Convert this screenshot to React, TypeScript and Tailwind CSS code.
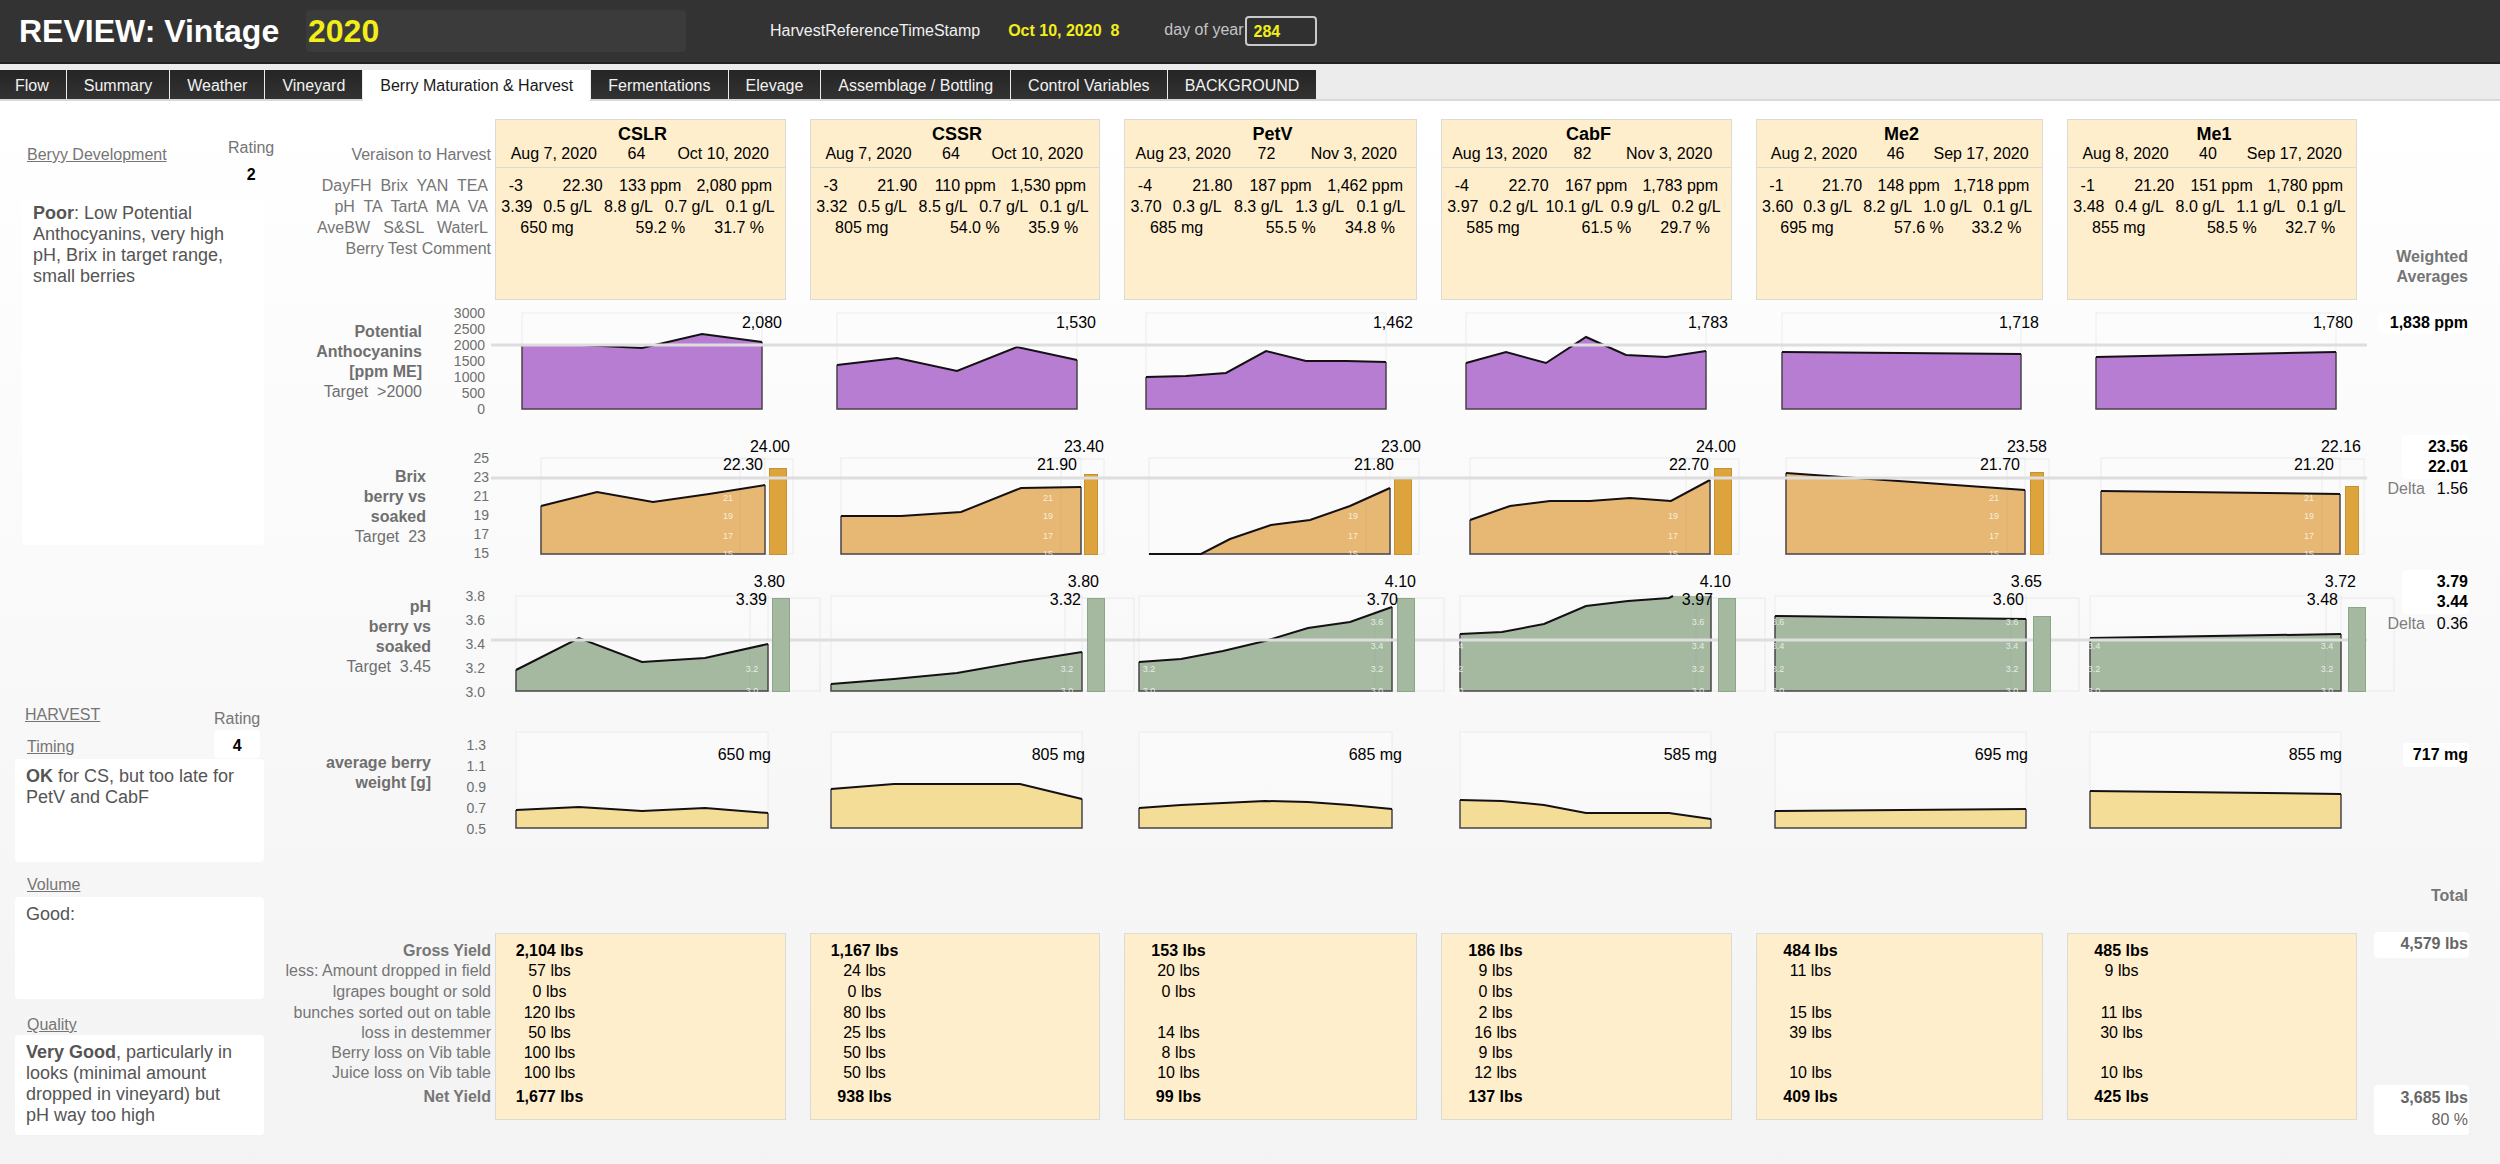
import React from "react";

type Point = [number, number];

type Series = {
  points: Point[];
  /** How many of the points carry the heavy top line; all of them by default. */
  stroked?: number;
  bar?: { x: number; width: number; top: number };
  frame?: { x: number; right: number };
  ticks?: { x: number; labels: string[] }[];
};

type Measure = {
  id: string;
  title: string[];
  target?: string;
  scale: string[];
  titleClass: string;
  scaleClass: string;
  rowClass: string;
  viewBox: string;
  top: number;
  base: number;
  fill: string;
  barFill?: string;
  barStroke?: string;
  barTop?: number;
  targetY?: number;
  barsOverTarget?: boolean;
  tickY?: Record<string, number>;
  series: Series[];
};

const COLUMNS = "grid grid-cols-[291fr_290fr_293fr_291fr_287fr_290fr] gap-x-6";

const ACTIVE_TAB = "Berry Maturation & Harvest";

const tabs = [
  "Flow",
  "Summary",
  "Weather",
  "Vineyard",
  ACTIVE_TAB,
  "Fermentations",
  "Elevage",
  "Assemblage / Bottling",
  "Control Variables",
  "BACKGROUND",
];

const blocks = [
  {
    name: "CSLR",
    dates: ["Aug 7, 2020", "64", "Oct 10, 2020"],
    first: ["-3", "22.30", "133 ppm", "2,080 ppm"],
    second: ["3.39", "0.5 g/L", "8.8 g/L", "0.7 g/L", "0.1 g/L"],
    third: ["650 mg", "59.2 %", "31.7 %"],
    anth: "2,080",
    brix: ["24.00", "22.30"],
    ph: ["3.80", "3.39"],
    weight: "650 mg",
  },
  {
    name: "CSSR",
    dates: ["Aug 7, 2020", "64", "Oct 10, 2020"],
    first: ["-3", "21.90", "110 ppm", "1,530 ppm"],
    second: ["3.32", "0.5 g/L", "8.5 g/L", "0.7 g/L", "0.1 g/L"],
    third: ["805 mg", "54.0 %", "35.9 %"],
    anth: "1,530",
    brix: ["23.40", "21.90"],
    ph: ["3.80", "3.32"],
    weight: "805 mg",
  },
  {
    name: "PetV",
    dates: ["Aug 23, 2020", "72", "Nov 3, 2020"],
    first: ["-4", "21.80", "187 ppm", "1,462 ppm"],
    second: ["3.70", "0.3 g/L", "8.3 g/L", "1.3 g/L", "0.1 g/L"],
    third: ["685 mg", "55.5 %", "34.8 %"],
    anth: "1,462",
    brix: ["23.00", "21.80"],
    ph: ["4.10", "3.70"],
    weight: "685 mg",
  },
  {
    name: "CabF",
    dates: ["Aug 13, 2020", "82", "Nov 3, 2020"],
    first: ["-4", "22.70", "167 ppm", "1,783 ppm"],
    second: ["3.97", "0.2 g/L", "10.1 g/L", "0.9 g/L", "0.2 g/L"],
    third: ["585 mg", "61.5 %", "29.7 %"],
    anth: "1,783",
    brix: ["24.00", "22.70"],
    ph: ["4.10", "3.97"],
    weight: "585 mg",
  },
  {
    name: "Me2",
    dates: ["Aug 2, 2020", "46", "Sep 17, 2020"],
    first: ["-1", "21.70", "148 ppm", "1,718 ppm"],
    second: ["3.60", "0.3 g/L", "8.2 g/L", "1.0 g/L", "0.1 g/L"],
    third: ["695 mg", "57.6 %", "33.2 %"],
    anth: "1,718",
    brix: ["23.58", "21.70"],
    ph: ["3.65", "3.60"],
    weight: "695 mg",
  },
  {
    name: "Me1",
    dates: ["Aug 8, 2020", "40", "Sep 17, 2020"],
    first: ["-1", "21.20", "151 ppm", "1,780 ppm"],
    second: ["3.48", "0.4 g/L", "8.0 g/L", "1.1 g/L", "0.1 g/L"],
    third: ["855 mg", "58.5 %", "32.7 %"],
    anth: "1,780",
    brix: ["22.16", "21.20"],
    ph: ["3.72", "3.48"],
    weight: "855 mg",
  },
];

const anthocyanins: Measure = {
  id: "anth",
  title: ["Potential", "Anthocyanins", "[ppm ME]"],
  target: "Target  >2000",
  scale: ["3000", "2500", "2000", "1500", "1000", "500", "0"],
  titleClass: "pt-[22px] pr-[11px]",
  scaleClass: "pt-[5px] pr-[10px] leading-[16px]",
  rowClass: "h-[130px]",
  viewBox: "495 300 1862 130",
  top: 313,
  base: 409,
  fill: "#b77dd2",
  targetY: 345,
  series: [
    { points: [[522, 345], [582, 345], [642, 348], [702, 334], [762, 342]] },
    { points: [[837, 365], [897, 358], [957, 371], [1017, 347], [1077, 360]] },
    { points: [[1146, 377], [1186, 376], [1226, 373], [1266, 351], [1306, 361], [1346, 361], [1386, 362]] },
    { points: [[1466, 363], [1506, 352], [1546, 363], [1586, 337], [1626, 355], [1666, 357], [1706, 351]] },
    { points: [[1782, 352], [2021, 354]] },
    { points: [[2096, 357], [2336, 352]] },
  ],
};

const brix: Measure = {
  id: "brix",
  title: ["Brix", "berry vs", "soaked"],
  target: "Target  23",
  scale: ["25", "23", "21", "19", "17", "15"],
  titleClass: "pt-[37px] pr-[7px]",
  scaleClass: "pt-[19px] pr-[6px] leading-[19px]",
  rowClass: "h-[135px]",
  viewBox: "495 430 1862 135",
  top: 458,
  base: 554,
  fill: "#e6b874",
  barFill: "#dda33d",
  barStroke: "#c8912f",
  barTop: 459,
  targetY: 478,
  tickY: { "21": 501, "19": 519, "17": 539, "15": 557 },
  series: [
    {
      points: [[541, 506], [597, 492], [653, 502], [709, 494], [765, 485]],
      bar: { x: 769, width: 18, top: 468 },
      frame: { x: 740, right: 793 },
      ticks: [{ x: 728, labels: ["21", "19", "17", "15"] }],
    },
    {
      points: [[841, 516], [901, 516], [961, 512], [1021, 488], [1081, 487]],
      bar: { x: 1084, width: 14, top: 474 },
      frame: { x: 1061, right: 1104 },
      ticks: [{ x: 1048, labels: ["21", "19", "17", "15"] }],
    },
    {
      points: [[1149, 554], [1201, 554], [1230, 539], [1271, 525], [1310, 520], [1350, 506], [1390, 488]],
      bar: { x: 1394, width: 18, top: 479 },
      frame: { x: 1366, right: 1419 },
      ticks: [{ x: 1353, labels: ["19", "17", "15"] }],
    },
    {
      points: [[1470, 520], [1510, 506], [1550, 501], [1590, 501], [1630, 498], [1671, 501], [1710, 480]],
      bar: { x: 1714, width: 18, top: 468 },
      frame: { x: 1686, right: 1739 },
      ticks: [{ x: 1673, labels: ["19", "17", "15"] }],
    },
    {
      points: [[1786, 473], [2025, 490]],
      bar: { x: 2030, width: 14, top: 472 },
      frame: { x: 2007, right: 2049 },
      ticks: [{ x: 1994, labels: ["21", "19", "17", "15"] }],
    },
    {
      points: [[2101, 491], [2340, 494]],
      bar: { x: 2345, width: 14, top: 486 },
      frame: { x: 2322, right: 2364 },
      ticks: [{ x: 2309, labels: ["21", "19", "17", "15"] }],
    },
  ],
};

const ph: Measure = {
  id: "ph",
  title: ["pH", "berry vs", "soaked"],
  target: "Target  3.45",
  scale: ["3.8", "3.6", "3.4", "3.2", "3.0"],
  titleClass: "pt-[32px] pr-[2px]",
  scaleClass: "pt-[19px] pr-[10px] leading-[24px]",
  rowClass: "h-[145px]",
  viewBox: "495 565 1862 145",
  top: 596,
  base: 691,
  fill: "#a5b9a1",
  barFill: "#a5b9a1",
  barStroke: "#8ba787",
  barTop: 598,
  targetY: 640,
  barsOverTarget: true,
  tickY: { "3.6": 625, "3.4": 649, "3.2": 672, "3.0": 694 },
  series: [
    {
      points: [[516, 670], [579, 638], [642, 662], [705, 658], [768, 644]],
      bar: { x: 772, width: 18, top: 598 },
      frame: { x: 750, right: 820 },
      ticks: [{ x: 752, labels: ["3.2", "3.0"] }],
    },
    {
      points: [[831, 684], [894, 679], [957, 673], [1019, 662], [1082, 652]],
      bar: { x: 1087, width: 18, top: 598 },
      frame: { x: 1065, right: 1134 },
      ticks: [{ x: 1067, labels: ["3.2", "3.0"] }],
    },
    {
      points: [[1139, 662], [1181, 659], [1223, 651], [1265, 641], [1308, 628], [1350, 622], [1392, 607]],
      bar: { x: 1397, width: 18, top: 598 },
      frame: { x: 1375, right: 1444 },
      ticks: [
        { x: 1149, labels: ["3.2", "3.0"] },
        { x: 1377, labels: ["3.6", "3.4", "3.2", "3.0"] },
      ],
    },
    {
      points: [[1460, 634], [1502, 632], [1544, 624], [1586, 606], [1628, 601], [1669, 598], [1673, 596], [1711, 596]],
      stroked: 7,
      bar: { x: 1718, width: 18, top: 598 },
      frame: { x: 1696, right: 1765 },
      ticks: [
        { x: 1457, labels: ["3.4", "3.2", "3.0"] },
        { x: 1698, labels: ["3.6", "3.4", "3.2", "3.0"] },
      ],
    },
    {
      points: [[1775, 616], [2026, 619]],
      bar: { x: 2033, width: 18, top: 616 },
      frame: { x: 2011, right: 2079 },
      ticks: [
        { x: 1778, labels: ["3.6", "3.4", "3.2", "3.0"] },
        { x: 2012, labels: ["3.6", "3.4", "3.2", "3.0"] },
      ],
    },
    {
      points: [[2090, 638], [2341, 634]],
      bar: { x: 2348, width: 18, top: 607 },
      frame: { x: 2326, right: 2394 },
      ticks: [
        { x: 2094, labels: ["3.4", "3.2", "3.0"] },
        { x: 2327, labels: ["3.4", "3.2", "3.0"] },
      ],
    },
  ],
};

const weight: Measure = {
  id: "weight",
  title: ["average berry", "weight [g]"],
  scale: ["1.3", "1.1", "0.9", "0.7", "0.5"],
  titleClass: "pt-[43px] pr-[2px]",
  scaleClass: "pt-[25px] pr-[9px] leading-[21px]",
  rowClass: "h-[150px]",
  viewBox: "495 710 1862 150",
  top: 732,
  base: 828,
  fill: "#f3dd97",
  series: [
    { points: [[516, 810], [579, 807], [642, 811], [705, 808], [768, 813]] },
    { points: [[831, 789], [894, 784], [957, 784], [1020, 784], [1082, 799]] },
    { points: [[1139, 808], [1181, 805], [1223, 803], [1265, 801], [1308, 802], [1350, 805], [1392, 809]] },
    { points: [[1460, 800], [1502, 801], [1544, 805], [1586, 813], [1628, 813], [1669, 813], [1711, 819]] },
    { points: [[1775, 811], [2026, 809]] },
    { points: [[2090, 791], [2341, 794]] },
  ],
};

const yields: { label: string; values: string[]; strong?: boolean; height: string }[] = [
  { label: "Gross Yield", strong: true, height: "h-[28px] pt-[7px] border-t", values: ["2,104 lbs", "1,167 lbs", "153 lbs", "186 lbs", "484 lbs", "485 lbs"] },
  { label: "less: Amount dropped in field", height: "h-[21px]", values: ["57 lbs", "24 lbs", "20 lbs", "9 lbs", "11 lbs", "9 lbs"] },
  { label: "lgrapes bought or sold", height: "h-[21px]", values: ["0 lbs", "0 lbs", "0 lbs", "0 lbs", "", ""] },
  { label: "bunches sorted out on table", height: "h-[20px]", values: ["120 lbs", "80 lbs", "", "2 lbs", "15 lbs", "11 lbs"] },
  { label: "loss in destemmer", height: "h-[20px]", values: ["50 lbs", "25 lbs", "14 lbs", "16 lbs", "39 lbs", "30 lbs"] },
  { label: "Berry loss on Vib table", height: "h-[20px]", values: ["100 lbs", "50 lbs", "8 lbs", "9 lbs", "", ""] },
  { label: "Juice loss on Vib table", height: "h-[24px]", values: ["100 lbs", "50 lbs", "10 lbs", "12 lbs", "10 lbs", "10 lbs"] },
  { label: "Net Yield", strong: true, height: "h-[33px] border-b", values: ["1,677 lbs", "938 lbs", "99 lbs", "137 lbs", "409 lbs", "425 lbs"] },
];

const path = (points: Point[]) => points.map((p) => p.join(",")).join(" ");

function Bars({ m }: { m: Measure }) {
  return (
    <>
      {m.series.map(
        (s, i) =>
          s.bar && (
            <rect
              key={i}
              x={s.bar.x + 0.5}
              y={s.bar.top + 0.5}
              width={s.bar.width - 1}
              height={m.base - s.bar.top}
              fill={m.barFill}
              stroke={m.barStroke}
            />
          ),
      )}
    </>
  );
}

function Chart({ m, children }: { m: Measure; children: React.ReactNode }) {
  return (
    <div className="relative min-w-0 flex-1">
      <svg
        className="block h-full w-full overflow-visible"
        viewBox={m.viewBox}
        preserveAspectRatio="none"
        role="img"
        aria-label={m.title.join(" ")}
      >
        {m.series.map((s, i) => {
          const left = s.points[0][0];
          const right = s.points[s.points.length - 1][0];
          return (
            <g key={i}>
              <rect x={left} y={m.top} width={right - left} height={m.base - m.top} fill="#fcfcfc" fillOpacity="0.5" stroke="#ececec" />
              <polygon points={`${path(s.points)} ${right},${m.base} ${left},${m.base}`} fill={m.fill} />
              {s.frame && (
                <rect
                  x={s.frame.x}
                  y={m.barTop}
                  width={s.frame.right - s.frame.x}
                  height={m.base - (m.barTop ?? 0)}
                  fill="none"
                  stroke="#808080"
                  strokeOpacity="0.13"
                />
              )}
              <polyline
                points={`${path([s.points[0]])} ${left},${m.base} ${right},${m.base} ${path([s.points[s.points.length - 1]])}`}
                fill="none"
                stroke="#4a444a"
                strokeWidth="1.5"
              />
              <polyline points={path(s.points.slice(0, s.stroked))} fill="none" stroke="#141014" strokeWidth="2" />
              {s.ticks?.map((column) =>
                column.labels.map((label) => (
                  <text
                    key={`${column.x}-${label}`}
                    x={column.x}
                    y={m.tickY?.[label]}
                    textAnchor="middle"
                    fontSize="9"
                    fill="#ffffff"
                    fillOpacity="0.75"
                  >
                    {label}
                  </text>
                )),
              )}
            </g>
          );
        })}
        {!m.barsOverTarget && <Bars m={m} />}
        {m.targetY && <line x1="491" x2="2367" y1={m.targetY} y2={m.targetY} stroke="#dedede" strokeWidth="3" />}
        {m.barsOverTarget && <Bars m={m} />}
      </svg>
      <div className={`absolute inset-x-0 top-0 ${COLUMNS}`}>{children}</div>
    </div>
  );
}

function MeasureRow({ m, labels, aside }: { m: Measure; labels: React.ReactNode; aside: React.ReactNode }) {
  return (
    <section className={`flex ${m.rowClass}`}>
      <div className="flex w-[227px] shrink-0 text-right text-[#6f6f6f]">
        <div className={`flex-1 leading-[20px] ${m.titleClass}`}>
          {m.title.map((line) => (
            <div key={line} className="font-bold">
              {line}
            </div>
          ))}
          {m.target && <div className="whitespace-pre">{m.target}</div>}
        </div>
        <div className={`w-[62px] text-[14px] ${m.scaleClass}`}>
          {m.scale.map((tick) => (
            <div key={tick}>{tick}</div>
          ))}
        </div>
      </div>
      <Chart m={m}>{labels}</Chart>
      <div className="flex w-[143px] shrink-0 flex-col items-end pr-[31px] leading-[20px] text-black">{aside}</div>
    </section>
  );
}

function SoakedAverages({ first, second, delta }: { first: string; second: string; delta: string }) {
  return (
    <div className="mt-[5px] text-right">
      <div className="ml-auto w-[67px] rounded bg-white py-[2px] pr-px font-bold">
        <div>{first}</div>
        <div>{second}</div>
      </div>
      <div className="flex justify-end pr-px">
        <span className="text-[#7d7d7d]">Delta</span>
        <span className="ml-[12px]">{delta}</span>
      </div>
    </div>
  );
}

function VarietyCard({ block }: { block: (typeof blocks)[number] }) {
  return (
    <article className="h-[181px] border border-[#dcdad4] bg-[#ffeecc] text-black">
      <h2 className="pt-[3px] pl-1 text-center text-[18px] leading-[22px] font-bold">{block.name}</h2>
      <div className="grid grid-cols-[116fr_50fr_124fr] border-b border-[#dddad2] pb-1 text-center leading-[18px]">
        {block.dates.map((v, i) => (
          <span key={i}>{v}</span>
        ))}
      </div>
      <div className="pt-[7px] leading-[21px] whitespace-nowrap">
        <div className="grid grid-cols-[27fr_80fr_79fr_91fr_13fr] text-right">
          {block.first.map((v, i) => (
            <span key={i}>{v}</span>
          ))}
        </div>
        <div className="grid grid-cols-[42fr_60fr_62fr_60fr_62fr_4fr] text-center">
          {block.second.map((v, i) => (
            <span key={i}>{v}</span>
          ))}
        </div>
        <div className="grid grid-cols-[78fr_112fr_79fr_21fr] text-right">
          {block.third.map((v, i) => (
            <span key={i}>{v}</span>
          ))}
        </div>
      </div>
    </article>
  );
}

function PairLabels({ pick, outer, inner }: { pick: "brix" | "ph"; outer: string; inner: string }) {
  return (
    <>
      {blocks.map((b) => (
        <div key={b.name} className="pt-[8px] text-right leading-[18px] text-black">
          <div className={outer}>{b[pick][0]}</div>
          <div className={inner}>{b[pick][1]}</div>
        </div>
      ))}
    </>
  );
}

function Notes({ className, children }: { className: string; children: React.ReactNode }) {
  return (
    <div className={`rounded bg-white pr-5 pl-[11px] text-[18px] leading-[21px] text-[#555555] ${className}`}>{children}</div>
  );
}

export default function App() {
  return (
    <div className="flex min-h-screen flex-col bg-white font-['Liberation_Sans',Arial,sans-serif] text-[16px]">
      <header className="flex h-16 items-center border-b-2 border-[#222222] bg-[#333333]">
        <h1 className="ml-[19px] w-[287px] whitespace-nowrap text-[32px] leading-[40px] font-bold text-white">
          <label htmlFor="vintage">REVIEW: Vintage</label>
        </h1>
        <input
          id="vintage"
          defaultValue="2020"
          className="h-[42px] w-[380px] rounded bg-[#3b3b3b] pl-[2px] text-[32px] font-bold text-[#f2ee1a] outline-none"
        />
        <span className="ml-[84px] text-[#f0f0f0]">HarvestReferenceTimeStamp</span>
        <output className="ml-[28px] whitespace-pre font-bold text-[#f2ee1a]">Oct 10, 2020  8</output>
        <label htmlFor="day" className="ml-[45px] pb-[3px] text-[#c4c4c4]">
          day of year
        </label>
        <input
          id="day"
          defaultValue="284"
          className="ml-px h-[30px] w-[72px] rounded border-2 border-[#c9c9c9] bg-[#303030] pt-[2px] pl-[7px] font-bold text-[#f2ee1a] outline-none"
        />
      </header>

      <nav className="flex h-[37px] items-end gap-px border-b-2 border-[#d9d9d9] bg-[#ececec] leading-[20px]">
        {tabs.map((tab, i) => (
          <button
            key={tab}
            type="button"
            aria-current={tab === ACTIVE_TAB ? "page" : undefined}
            className={
              tab === ACTIVE_TAB
                ? "-mb-[2px] h-[31px] bg-white px-[17px] whitespace-nowrap text-[#1a1a1a]"
                : i === 0
                  ? "h-[29px] bg-linear-to-b from-[#252525] to-[#323232] pt-[2px] pr-[17px] pl-[15px] whitespace-nowrap text-[#f2f2f2]"
                  : "h-[29px] bg-linear-to-b from-[#252525] to-[#323232] px-[17px] pt-[2px] whitespace-nowrap text-[#f2f2f2]"
            }
          >
            {tab}
          </button>
        ))}
      </nav>

      <main className="flex flex-1 bg-linear-to-b from-white to-[#f3f3f3]">
        <aside className="w-[264px] shrink-0 pt-[37px] leading-[20px] text-[#757575]">
          <div className="flex">
            <h3 className="mt-[7px] ml-[27px] w-[201px] shrink-0 underline">Beryy Development</h3>
            <div className="shrink-0 text-center">
              <div>Rating</div>
              <div className="mt-[7px] font-bold text-black">2</div>
            </div>
          </div>
          <Notes className="mt-[13px] ml-[22px] h-[347px] pt-[5px]">
            <b>Poor</b>: Low Potential Anthocyanins, very high pH, Brix in target range, small berries
          </Notes>

          <div className="mt-[160px] flex">
            <div className="ml-[25px] w-[189px]">
              <h3 className="underline">HARVEST</h3>
              <h4 className="mt-[12px] pl-[2px] underline">Timing</h4>
            </div>
            <div className="mt-[4px] text-center">
              <div>Rating</div>
              <div className="mt-px rounded bg-white pt-[6px] pb-[2px] font-bold text-black">4</div>
            </div>
          </div>
          <Notes className="mt-[1px] ml-[15px] h-[103px] pt-[7px]">
            <b>OK</b> for CS, but too late for PetV and CabF
          </Notes>
          <h4 className="mt-[13px] ml-[27px] underline">Volume</h4>
          <Notes className="mt-[2px] ml-[15px] h-[102px] pt-[7px]">Good:</Notes>
          <h4 className="mt-[16px] ml-[27px] underline">Quality</h4>
          <Notes className="ml-[15px] h-[100px] pt-[7px]">
            <b>Very Good</b>, particularly in looks (minimal amount dropped in vineyard) but pH way too high
          </Notes>
        </aside>

        <div className="min-w-0 flex-1 pt-[18px] pl-1">
          <section className="flex">
            <div className="w-[227px] shrink-0 pt-[26px] pr-[4px] text-right leading-[21px] whitespace-pre text-[#757575]">
              <div className="leading-[20px]">Veraison to Harvest</div>
              <div className="mt-[10px] pr-[3px]">
                <div>DayFH  Brix  YAN  TEA</div>
                <div>pH  TA  TartA  MA  VA</div>
                <div>AveBW   S&amp;SL   WaterL</div>
              </div>
              <div>Berry Test Comment</div>
            </div>
            <div className={`flex-1 ${COLUMNS}`}>
              {blocks.map((b) => (
                <VarietyCard key={b.name} block={b} />
              ))}
            </div>
            <div className="w-[143px] shrink-0 pt-[128px] pr-[32px] text-right leading-[20px] font-bold text-[#757575]">
              Weighted
              <br />
              Averages
            </div>
          </section>

          <MeasureRow
            m={anthocyanins}
            labels={blocks.map((b) => (
              <div key={b.name} className="pt-[13px] pr-[4px] text-right leading-[20px] text-black">
                {b.anth}
              </div>
            ))}
            aside={<div className="mt-[13px] rounded bg-white pr-px pl-3 font-bold">1,838 ppm</div>}
          />
          <MeasureRow
            m={brix}
            labels={<PairLabels pick="brix" outer="-mr-[4px]" inner="mr-[23px]" />}
            aside={<SoakedAverages first="23.56" second="22.01" delta="1.56" />}
          />
          <MeasureRow
            m={ph}
            labels={<PairLabels pick="ph" outer="mr-px" inner="mr-[19px]" />}
            aside={<SoakedAverages first="3.79" second="3.44" delta="0.36" />}
          />
          <MeasureRow
            m={weight}
            labels={blocks.map((b) => (
              <div key={b.name} className="pt-[35px] pr-[15px] text-right leading-[20px] text-black">
                {b.weight}
              </div>
            ))}
            aside={<div className="mt-[33px] rounded bg-white py-[2px] pr-px pl-[10px] font-bold">717 mg</div>}
          />

          <section className="flex">
            <table className="mt-[73px] h-[187px] flex-1 table-fixed border-collapse leading-[20px]">
              <colgroup>
                <col className="w-[227px]" />
                <col className="w-[315px]" />
                <col className="w-[314px]" />
                <col className="w-[317px]" />
                <col className="w-[315px]" />
                <col className="w-[311px]" />
                <col className="w-[290px]" />
              </colgroup>
              <tbody>
                {yields.map((row) => (
                  <tr key={row.label} className={row.strong ? "font-bold" : ""}>
                    <th
                      scope="row"
                      className={`p-0 pr-[4px] text-right align-bottom whitespace-nowrap text-[#757575] ${row.strong ? "font-bold" : "font-normal"}`}
                    >
                      <div className={`border-transparent ${row.height}`}>{row.label}</div>
                    </th>
                    {row.values.map((value, i) => (
                      <td key={i} className="p-0 text-black">
                        <div className={`border-x border-[#dcdad4] bg-[#ffeecc] ${row.height} ${i < 5 ? "mr-6" : ""}`}>
                          <div className="w-[107px] text-center">{value}</div>
                        </div>
                      </td>
                    ))}
                  </tr>
                ))}
              </tbody>
            </table>
            <div className="flex w-[143px] shrink-0 flex-col items-end pt-[26px] pr-[31px] text-right leading-[20px] text-[#666666]">
              <div className="pr-px font-bold text-[#757575]">Total</div>
              <div className="mt-[26px] h-[26px] w-[95px] rounded bg-white pt-[2px] pr-px font-bold">4,579 lbs</div>
              <div className="mt-[127px] h-[50px] w-[95px] rounded bg-white pt-[3px] pr-px">
                <div className="font-bold">3,685 lbs</div>
                <div className="mt-[2px]">80 %</div>
              </div>
            </div>
          </section>
        </div>
      </main>
    </div>
  );
}
